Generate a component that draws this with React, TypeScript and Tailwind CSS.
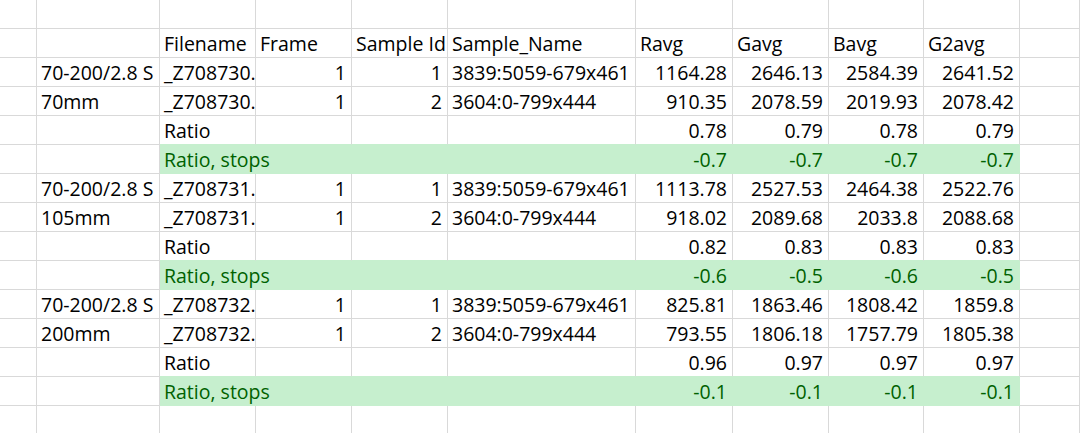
import React from "react";

type Cell = string | number | null;

const rows: { cells: Cell[]; green?: boolean }[] = [
  { cells: [] },
  { cells: [null, null, "Filename", "Frame", "Sample Id", "Sample_Name", "Ravg", "Gavg", "Bavg", "G2avg"] },
  { cells: [null, "70-200/2.8 S", "_Z708730.", 1, 1, "3839:5059-679x461", 1164.28, 2646.13, 2584.39, 2641.52] },
  { cells: [null, "70mm", "_Z708730.", 1, 2, "3604:0-799x444", 910.35, 2078.59, 2019.93, 2078.42] },
  { cells: [null, null, "Ratio", null, null, null, 0.78, 0.79, 0.78, 0.79] },
  { cells: [null, null, "Ratio, stops", null, null, null, -0.7, -0.7, -0.7, -0.7], green: true },
  { cells: [null, "70-200/2.8 S", "_Z708731.", 1, 1, "3839:5059-679x461", 1113.78, 2527.53, 2464.38, 2522.76] },
  { cells: [null, "105mm", "_Z708731.", 1, 2, "3604:0-799x444", 918.02, 2089.68, 2033.8, 2088.68] },
  { cells: [null, null, "Ratio", null, null, null, 0.82, 0.83, 0.83, 0.83] },
  { cells: [null, null, "Ratio, stops", null, null, null, -0.6, -0.5, -0.6, -0.5], green: true },
  { cells: [null, "70-200/2.8 S", "_Z708732.", 1, 1, "3839:5059-679x461", 825.81, 1863.46, 1808.42, 1859.8] },
  { cells: [null, "200mm", "_Z708732.", 1, 2, "3604:0-799x444", 793.55, 1806.18, 1757.79, 1805.38] },
  { cells: [null, null, "Ratio", null, null, null, 0.96, 0.97, 0.97, 0.97] },
  { cells: [null, null, "Ratio, stops", null, null, null, -0.1, -0.1, -0.1, -0.1], green: true },
  { cells: [] },
];

export default function App() {
  return (
    <div
      className="w-[1080px] h-[433px] overflow-hidden bg-white text-black"
      style={{ fontFamily: '"Open Sans", "Noto Sans", sans-serif' }}
    >
      <div className="grid grid-cols-[37px_123px_96px_96px_96px_188px_97px_96px_95px_96px_1fr] auto-rows-[29px]">
        {rows.map((row, r) =>
          Array.from({ length: 11 }).map((_, c) => {
            const v = row.cells[c] ?? null;
            const isGreen = !!row.green && c >= 2 && c <= 9;
            const nextGreen = !!rows[r + 1]?.green && c >= 2 && c <= 9;
            const isNum = typeof v === "number";
            const nextEmpty = (row.cells[c + 1] ?? null) === null;
            const canOverflow = !isNum && nextEmpty;
            return (
              <div
                key={`${r}-${c}`}
                className={
                  "relative flex items-end whitespace-nowrap border-r border-b pb-[1px] text-[19.5px] leading-[24px] " +
                  (canOverflow ? "overflow-visible " : "overflow-hidden ") +
                  (isGreen
                    ? "bg-[#c6efce] border-r-[#c6efce] text-[#006100] "
                    : "border-r-[#d9d9d9] ") +
                  (isGreen || nextGreen ? "border-b-[#c6efce] " : "border-b-[#d9d9d9] ") +
                  (isNum ? "justify-end pr-[5px] pl-[4px]" : "justify-start pl-[4px]")
                }
              >
                {v !== null ? <span className="relative z-10">{String(v)}</span> : null}
              </div>
            );
          })
        )}
      </div>
    </div>
  );
}
